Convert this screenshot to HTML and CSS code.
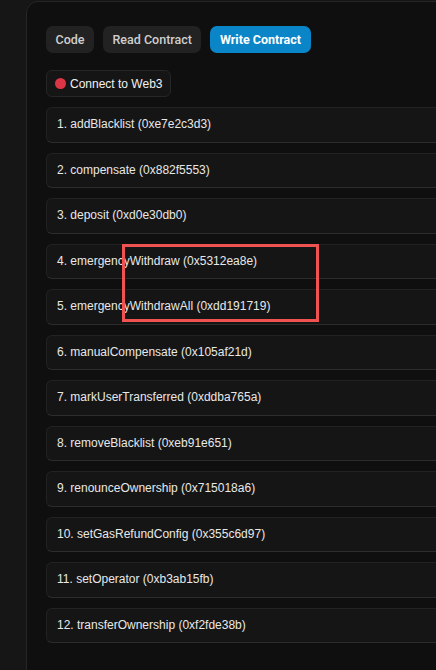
FILE: index.html
```html
<!DOCTYPE html>
<html>
<head>
<meta charset="utf-8">
<link rel="stylesheet" href="styles.css">
</head>
<body>
<div class="page">
  <div class="card">
    <div class="tabs">
      <button class="tab">Code</button>
      <button class="tab">Read Contract</button>
      <button class="tab active">Write Contract</button>
    </div>
    <div class="connect-row">
      <button class="connect"><span class="dot"></span>Connect to Web3</button>
    </div>
    <div class="list">
      <div class="fn">1. addBlacklist (0xe7e2c3d3)</div>
      <div class="fn">2. compensate (0x882f5553)</div>
      <div class="fn">3. deposit (0xd0e30db0)</div>
      <div class="fn">4. emergencyWithdraw (0x5312ea8e)</div>
      <div class="fn">5. emergencyWithdrawAll (0xdd191719)</div>
      <div class="fn">6. manualCompensate (0x105af21d)</div>
      <div class="fn">7. markUserTransferred (0xddba765a)</div>
      <div class="fn">8. removeBlacklist (0xeb91e651)</div>
      <div class="fn">9. renounceOwnership (0x715018a6)</div>
      <div class="fn">10. setGasRefundConfig (0x355c6d97)</div>
      <div class="fn">11. setOperator (0xb3ab15fb)</div>
      <div class="fn">12. transferOwnership (0xf2fde38b)</div>
      <div class="highlight"></div>
    </div>
  </div>
</div>
</body>
</html>
```
FILE: styles.css
```css
html, body {
  margin: 0;
  padding: 0;
  background: #161616;
  overflow: hidden;
  height: 670px;
}
.page {
  padding: 1px 0 0 26px;
}
.card {
  width: 620px;
  height: 760px;
  box-sizing: border-box;
  background: #0f0f0f;
  border: 1px solid #262626;
  border-radius: 12px;
  padding: 24px 19px;
}
.tabs {
  display: flex;
  gap: 9px;
}
.tab {
  font-family: Roboto, "Liberation Sans", sans-serif;
  font-size: 12.5px;
  font-weight: 500;
  height: 27px;
  padding: 0 9.5px;
  border: none;
  border-radius: 7px;
  background: #222222;
  color: #cfcfcf;
}
.tab.active {
  background: #0a86c8;
  color: #ffffff;
  font-weight: 700;
}
.connect-row {
  margin-top: 17px;
  display: flex;
}
.connect {
  display: flex;
  align-items: center;
  gap: 4px;
  height: 27px;
  padding: 0 7px 0 8px;
  font-family: "Liberation Sans", Arial, sans-serif;
  font-size: 12px;
  color: #f2f2f2;
  background: #151515;
  border: 1px solid #262626;
  border-radius: 6px;
}
.dot {
  width: 11px;
  height: 11px;
  border-radius: 50%;
  background: #dc3545;
}
.list {
  position: relative;
  margin-top: 10px;
  display: flex;
  flex-direction: column;
  gap: 10px;
}
.fn {
  font-family: "Liberation Sans", Arial, sans-serif;
  font-size: 12px;
  line-height: 19.5px;
  padding: 7px 10px;
  color: #e8e8e8;
  background: #151515;
  border: 1px solid #222222;
  border-bottom-color: #2c2c2c;
  border-radius: 6px;
}
.highlight {
  position: absolute;
  left: 76px;
  top: 137px;
  width: 191px;
  height: 72px;
  border: 3px solid #f05252;
}
```
